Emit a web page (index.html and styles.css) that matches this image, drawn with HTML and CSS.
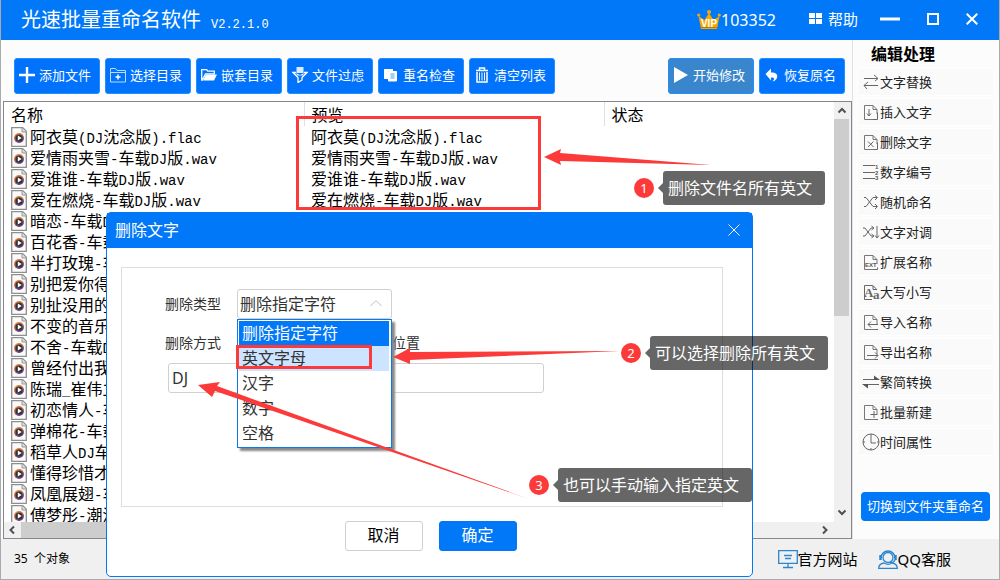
FILE: index.html
```html
<!DOCTYPE html>
<html lang="zh-CN">
<head>
<meta charset="utf-8">
<title>光速批量重命名软件</title>
<link rel="stylesheet" href="styles.css">
</head>
<body>
<svg class="defs" aria-hidden="true">
  <defs>
    <linearGradient id="disc" x1="0" y1="0" x2="0.5" y2="1">
      <stop offset="0" stop-color="#f08a3c"/>
      <stop offset="0.5" stop-color="#c9704e"/>
      <stop offset="1" stop-color="#5a3a8c"/>
    </linearGradient>
    <symbol id="media" viewBox="0 0 16 20">
      <path d="M.7.7h11l3.600 3.600v15H.7z" fill="#fafafa" stroke="#8e8e8e" stroke-width="1.300"/>
      <path d="M11 .8v4.200h4.200" fill="#ddd" stroke="#999"/>
      <circle cx="8" cy="11" r="5" fill="url(#disc)"/>
      <circle cx="8" cy="11" r="3.600" fill="#333"/>
      <path d="M6.800 8.600v4.800l3.900-2.400z" fill="#fff"/>
    </symbol>
    <symbol id="page" viewBox="0 0 18 16">
      <path d="M13.500 15.500H2.500V1.500h8.500l4 4v4.500M11 1.500v4h4" fill="none" stroke="#777"/>
    </symbol>
  </defs>
</svg>
<div class="app">
  <header class="titlebar">
    <h1 class="title">光速批量重命名软件</h1>
    <span class="version">V2.2.1.0</span>
    <div class="account">
      <svg width="24" height="20" viewBox="0 0 24 20"><path d="M4 19 1.500 6l6 4L12 3l4.500 7 6-4L20 19z" fill="#f5a800"/><circle cx="12" cy="2" r="2" fill="#f5a800"/><circle cx="1.700" cy="5" r="1.600" fill="#f5a800"/><circle cx="22.300" cy="5" r="1.600" fill="#f5a800"/><path d="M4 17.500h16" stroke="#b97a10"/><text x="12" y="16.500" class="vip">VIP</text></svg>
      <span>103352</span>
    </div>
    <button class="help"><svg width="14" height="12" viewBox="0 0 14 12"><path d="M0 0h6v5H0zM7 0h6v5H7zM0 6h6v5H0zM7 6h6v5H7z" fill="#fff"/></svg>帮助</button>
    <div class="window-buttons">
      <button aria-label="最小化"><svg width="20" height="14" viewBox="0 0 20 14"><path d="M0 6h20" stroke="#fff" stroke-width="3"/></svg></button>
      <button aria-label="最大化"><svg width="12" height="14" viewBox="0 0 12 14"><path d="M1 1h10v10H1z" fill="none" stroke="#fff" stroke-width="2"/></svg></button>
      <button aria-label="关闭"><svg width="12" height="14" viewBox="0 0 12 14"><path d="m.7.7 10.600 10.600m0-10.600L.7 11.300" stroke="#fff" stroke-width="2"/></svg></button>
    </div>
  </header>

  <div class="body">
    <main class="main">
      <div class="toolbar">
        <button class="tool"><svg width="16" height="16"><path d="M8 0v16M0 8h16" stroke="#fff" stroke-width="2.400"/></svg>添加文件</button>
        <button class="tool"><svg width="16" height="16"><path d="M.5 4.500v-3h5l1.500 2h8.500v11.500H.5z M.5 5.500h15" fill="none" stroke="#b9dcff"/><path d="M8 7.500v5M5.500 10h5" stroke="#fff" stroke-width="1.500"/></svg>选择目录</button>
        <button class="tool"><svg width="16" height="16"><path d="M.7 13V2.700h5l1 1.500h6.600v2.600H4.500L1.300 13z" fill="none" stroke="#fff" stroke-width="1.300"/><path d="M5 7.500h11L13 13.500H2z" fill="#fff"/></svg>嵌套目录</button>
        <button class="tool"><svg width="16" height="16"><path d="M4.500 0h7v6h-7z" fill="#d9ecff"/><path d="M4 5.500H1l5 5v5l4-2.500v-2.500l5-5h-3" fill="none" stroke="#fff" stroke-width="1.300"/><path d="m3.500 6 4.500 2 4.500-2-2 2.500h-5z" fill="#fff"/></svg>文件过虑</button>
        <button class="tool"><svg width="16" height="16"><path d="M1 2h9v2H5v8H1z" fill="#fff"/><path d="M5.500 4.500h8v9.500h-8z" fill="#fff" stroke="#fff"/><path d="M7.500 7h4M7.500 9h4M7.500 11h4" stroke="#4b9df5"/></svg>重名检查</button>
        <button class="tool"><svg width="16" height="16"><path d="M2 3.500h12M5.500 3V1h5v2M3 5v10h10V5" fill="none" stroke="#fff" stroke-width="1.500"/><path d="M5.500 5.500v8M8 5.500v8M10.500 5.500v8" stroke="#fff"/></svg>清空列表</button>
        <button class="tool tool-start"><svg width="16" height="16"><path d="M1 0v16l14-8z" fill="#fff"/></svg>开始修改</button>
        <button class="tool"><svg width="16" height="16"><path d="M7 1.500v4c5 0 7 2 6 5-.5 2-2 3.500-4.500 4 2.500-2.500 2-4-1.500-4v3L1.500 7z" fill="#fff"/></svg>恢复原名</button>
      </div>

      <div class="listbox">
        <div class="list-view">
          <table class="files">
            <thead><tr><th>名称</th><th>预览</th><th>状态</th></tr></thead>
            <tbody>
              <tr><td><svg class="fi"><use href="#media"/></svg>阿衣莫<i>(DJ</i>沈念版<i>).flac</i></td><td>阿衣莫<i>(DJ</i>沈念版<i>).flac</i></td><td></td></tr>
              <tr><td><svg class="fi"><use href="#media"/></svg>爱情雨夹雪<i>-</i>车载<i>DJ</i>版<i>.wav</i></td><td>爱情雨夹雪<i>-</i>车载<i>DJ</i>版<i>.wav</i></td><td></td></tr>
              <tr><td><svg class="fi"><use href="#media"/></svg>爱谁谁<i>-</i>车载<i>DJ</i>版<i>.wav</i></td><td>爱谁谁<i>-</i>车载<i>DJ</i>版<i>.wav</i></td><td></td></tr>
              <tr><td><svg class="fi"><use href="#media"/></svg>爱在燃烧<i>-</i>车载<i>DJ</i>版<i>.wav</i></td><td>爱在燃烧<i>-</i>车载<i>DJ</i>版<i>.wav</i></td><td></td></tr>
              <tr><td><svg class="fi"><use href="#media"/></svg>暗恋<i>-</i>车载<i>D</i></td><td></td><td></td></tr>
              <tr><td><svg class="fi"><use href="#media"/></svg>百花香<i>-</i>车载</td><td></td><td></td></tr>
              <tr><td><svg class="fi"><use href="#media"/></svg>半打玫瑰<i>-</i>车</td><td></td><td></td></tr>
              <tr><td><svg class="fi"><use href="#media"/></svg>别把爱你得</td><td></td><td></td></tr>
              <tr><td><svg class="fi"><use href="#media"/></svg>别扯没用的</td><td></td><td></td></tr>
              <tr><td><svg class="fi"><use href="#media"/></svg>不变的音乐</td><td></td><td></td></tr>
              <tr><td><svg class="fi"><use href="#media"/></svg>不舍<i>-</i>车载<i>D</i></td><td></td><td></td></tr>
              <tr><td><svg class="fi"><use href="#media"/></svg>曾经付出我</td><td></td><td></td></tr>
              <tr><td><svg class="fi"><use href="#media"/></svg>陈瑞<i>_</i>崔伟立</td><td></td><td></td></tr>
              <tr><td><svg class="fi"><use href="#media"/></svg>初恋情人<i>-</i>车</td><td></td><td></td></tr>
              <tr><td><svg class="fi"><use href="#media"/></svg>弹棉花<i>-</i>车载</td><td></td><td></td></tr>
              <tr><td><svg class="fi"><use href="#media"/></svg>稻草人<i>DJ</i>车</td><td></td><td></td></tr>
              <tr><td><svg class="fi"><use href="#media"/></svg>懂得珍惜才</td><td></td><td></td></tr>
              <tr><td><svg class="fi"><use href="#media"/></svg>凤凰展翅<i>-</i>车</td><td></td><td></td></tr>
              <tr><td><svg class="fi"><use href="#media"/></svg>傅梦彤<i>-</i>潮汐</td><td></td><td></td></tr>
            </tbody>
          </table>
        </div>
        <div class="vbar">
          <svg width="16" height="17"><path d="m4.500 10.500 3.500-3.500 3.500 3.500" class="chev"/></svg>
          <div class="vthumb"></div>
          <svg width="16" height="17" class="end"><path d="m4.500 5.500 3.500 3.500 3.500-3.500" class="chev"/></svg>
        </div>
        <div class="hbar">
          <svg width="17" height="16"><path d="M10 4.500 6.500 8l3.500 3.500" class="chev"/></svg>
          <div class="hthumb"></div>
          <svg width="17" height="16" class="end"><path d="M6 4.500 9.500 8 6 11.500" class="chev"/></svg>
        </div>
      </div>
    </main>

    <aside class="side">
      <h2 class="side-title">编辑处理</h2>
      <nav class="side-list">
        <button class="side-item"><svg width="18" height="18"><path d="M2 5.500h14m-4-3.500 4 3.500-3 2.500M16 12.500H2m4-3.500-4 3.500L5 16" class="ln"/></svg>文字替换</button>
        <button class="side-item"><svg width="18" height="18"><use href="#page" width="18" height="16" y="1"/><path d="M7 6v7m-2-2.500 2 2.500 2-2.500M11 16.500h4.500v-7" class="ln"/></svg>插入文字</button>
        <button class="side-item"><svg width="18" height="18"><use href="#page" width="18" height="16" y="1"/><path d="m6 8.500 5.500 5.500m0-5.500L6 14M12 16.500h3.500v-7" class="ln"/></svg>删除文字</button>
        <button class="side-item"><svg width="18" height="18"><path d="M1 2.500h12M1 9.500h12M1 15.500h12" class="ln"/><text x="13" y="6" class="mini">1</text><text x="13" y="11.500" class="mini">2</text><text x="13" y="17" class="mini">3</text></svg>数字编号</button>
        <button class="side-item"><svg width="18" height="18"><path d="M2 4.500h2l7 9h4M2 13.500h2l7-9h4m-2-2 2.500 2L13 7m0 4 2.500 2.500L13 16" class="ln"/></svg>随机命名</button>
        <button class="side-item"><svg width="18" height="18"><path d="M1 5h2l6 8h2.500M1 13h2l6-8h2.500M9.500 3l2.500 2-2.500 2M9.500 11l2.500 2-2.500 2M15 3v12m-2-2.500 2 2.500 2-2.500" class="ln"/></svg>文字对调</button>
        <button class="side-item"><svg width="18" height="18"><use href="#page" width="18" height="16" y="1"/><text x="3" y="14" class="mini">EXT</text><path d="M12 16.500h3.500v-2" class="ln"/></svg>扩展名称</button>
        <button class="side-item"><svg width="18" height="18"><path d="M10 16.500H2.500V2.500h8l4 3.500M11 2.500v4h4" class="ln"/><text x="2" y="14" class="aa">A</text><text x="11" y="16" class="aa">a</text></svg>大写小写</button>
        <button class="side-item"><svg width="18" height="18"><use href="#page" width="18" height="16" y="1"/><path d="M16 11.500H6M9 8.500l-3 3 3 3M13 16.500h3" class="ln"/></svg>导入名称</button>
        <button class="side-item"><svg width="18" height="18"><use href="#page" width="18" height="16" y="1"/><path d="M5 12.500h11m-3-3 3 3-3 3M13 16.500h3" class="ln"/></svg>导出名称</button>
        <button class="side-item"><svg width="18" height="18"><path d="M1 6.500h16M17 11.500H1" class="ln"/><path d="M12 2.500 18 7h-6zM6 15.500 0 11h6z" fill="#555"/></svg>繁简转换</button>
        <button class="side-item"><svg width="18" height="18"><use href="#page" width="18" height="16" y="1"/><path d="M12 8v7M8.500 11.500h7M13 16.500h3" class="ln"/></svg>批量新建</button>
        <button class="side-item"><svg width="18" height="18"><circle cx="9" cy="9" r="8" class="ln"/><path d="M9 3v7h5M9 1v2M9 15v2M1 9h2M15 9h2" class="ln"/></svg>时间属性</button>
      </nav>
      <button class="switch">切换到文件夹重命名</button>
    </aside>
  </div>

  <footer class="status">
    <span class="count">35&nbsp; 个对象</span>
    <a class="link" href="#"><svg width="20" height="20"><path d="M.7 1.700h18.600v12.600H.7zM10 14.500v4M5 18.500h10M6 6.500h8M7 9.500h6" fill="none" stroke="#2b86d0" stroke-width="1.300"/></svg>官方网站</a>
    <a class="link" href="#"><svg width="20" height="20"><path d="M3 9a7 7 0 0 1 14 0" fill="none" stroke="#2b86d0" stroke-width="1.500"/><circle cx="10" cy="8.500" r="5" fill="none" stroke="#2b86d0" stroke-width="1.300"/><path d="M2.500 6v5M17.500 6v5" stroke="#2b86d0" stroke-width="2.500"/><path d="M17 11c-1 2-3 3-5 3M.7 19.300c0-3 2-4.800 5.300-5.300 2.500 1.700 5.500 1.700 8 0 3.300.5 5.300 2.300 5.300 5.300z" fill="none" stroke="#2b86d0" stroke-width="1.300"/></svg>QQ客服</a>
  </footer>
</div>

<section class="dialog" role="dialog" aria-labelledby="dlg-title">
  <header class="dialog-head">
    <h2 id="dlg-title" class="dialog-title">删除文字</h2>
    <button class="dialog-close" aria-label="关闭"><svg width="12" height="12"><path d="m.5.5 11 11m0-11-11 11" stroke="#fff"/></svg></button>
  </header>
  <div class="panel">
    <div class="fields">
      <label for="kind">删除类型</label>
      <div class="combo">
        <select id="kind" class="combo-box"><option>删除指定字符</option><option>英文字母</option><option>汉字</option><option>数字</option><option>空格</option></select>
        <svg class="combo-arrow" width="12" height="8"><path d="m.5 7 5.500-5.500L11.500 7" fill="none" stroke="#bbb"/></svg>
        <ul class="menu">
          <li class="selected">删除指定字符</li><li class="hover">英文字母</li><li>汉字</li><li>数字</li><li>空格</li>
        </ul>
      </div>
      <span></span>
      <span>删除方式</span><span></span><span>位置</span>
    </div>
    <input class="chars" type="text" value="DJ" aria-label="指定字符">
  </div>
  <div class="actions">
    <button class="action">取消</button>
    <button class="action primary">确定</button>
  </div>
</section>

<svg class="arrows" width="1000" height="580" aria-hidden="true">
  <path d="m544 157 17-8-1 4 151 12-151-4 1 4z"/>
  <path d="m393 357 17-9v4l210-1-210 9v4z"/>
  <path d="m198 385 22-3-3 4 312 113-314-108-3 6z"/>
</svg>
<div class="frame frame-preview"></div>
<div class="frame frame-option"></div>
<div class="note note-1"><span class="num">1</span><span class="tip">删除文件名所有英文</span></div>
<div class="note note-2"><span class="num">2</span><span class="tip">可以选择删除所有英文</span></div>
<div class="note note-3"><span class="num">3</span><span class="tip">也可以手动输入指定英文</span></div>
</body>
</html>
```

FILE: styles.css
```css
* { box-sizing: border-box; }
body {
  margin: 0;
  position: relative;
  font-family: "Noto Sans", "Noto Sans CJK SC", sans-serif;
  font-size: 16px;
  line-height: 20px;
  color: #000;
}
button, input, select { font: inherit; margin: 0; }
button { padding: 0; border: 0; background: none; color: inherit; }
h1, h2, ul { margin: 0; padding: 0; font-weight: 400; list-style: none; }
svg { flex: none; }
.defs { position: absolute; width: 0; height: 0; }

.app {
  display: flex;
  flex-direction: column;
  height: 100vh;
  border: 1px solid #aaa;
  border-top: 0;
  background: #f0f0f0;
}

/* Title bar */
.titlebar {
  flex: none;
  display: flex;
  align-items: center;
  height: 40px;
  padding: 0 21px 0 20px;
  background: #0078f8;
  color: #fff;
}
.title { font-size: 20px; }
.version {
  margin: 10px 0 0 10px;
  font: 12px/20px "Liberation Mono", monospace;
}
.account { display: flex; align-items: center; margin-left: auto; }
.vip { font: bold 10px "Liberation Sans", sans-serif; fill: #fff; text-anchor: middle; }
.help { display: flex; align-items: center; gap: 5px; margin-left: 33px; padding-bottom: 2px; font-size: 15px; }
.window-buttons { display: flex; gap: 27px; margin-left: 22px; }
.window-buttons button { display: flex; }

/* Main area */
.body { flex: 1; min-height: 0; display: grid; grid-template-columns: 1fr 147px; }
.main { display: flex; flex-direction: column; min-width: 0; min-height: 0; background: #fcfcfc; }
.toolbar { flex: none; display: flex; gap: 5px; padding: 18px 7px 7px 13px; }
.tool {
  display: flex;
  align-items: center;
  gap: 4px;
  width: 86px;
  height: 36px;
  padding: 0 0 2px 4px;
  border: 1px solid #1e90ff;
  border-radius: 3px;
  background: #0072fc;
  color: #fff;
  font-size: 13px;
}
.tool-start { margin-left: auto; background: #3a86cc; }

.listbox {
  flex: 1;
  min-height: 0;
  display: grid;
  grid-template: 1fr 16px / 1fr 17px;
  margin-left: 2px;
  border: 1px solid #828790;
  background: #f0f0f0;
}
.list-view { overflow: hidden; background: #fff; }
.files { width: 100%; table-layout: fixed; border-collapse: collapse; }
.files th, .files td { height: 21px; padding: 0 0 0 7px; text-align: left; font-weight: 400; line-height: 20px; white-space: nowrap; }
.files th { height: 24px; padding-top: 2px; border-right: 1px solid #e0e0e0; }
.files th:nth-child(-n+2) { width: 300px; }
.files th:last-child { border-right: 0; }
.files i { font: 14px/1 "Liberation Mono", monospace; }
.fi { width: 16px; height: 20px; margin-right: 3px; vertical-align: top; }
.vbar { display: flex; flex-direction: column; }
.vthumb { width: 15px; height: 47%; background: #cdcdcd; }
.vbar .end { margin-top: auto; }
.hbar { display: flex; grid-column: 1; }
.hthumb { width: 55%; background: #cdcdcd; }
.hbar .end { margin-left: auto; }
.chev { fill: none; stroke: #505050; stroke-width: 2; }

/* Sidebar */
.side {
  display: flex;
  flex-direction: column;
  padding: 4px 4px 18px;
  border-left: 1px solid #e2e2e2;
  background: #fcfcfc;
}
.side-title { margin: 0 0 4px 14px; font-size: 16px; font-weight: 700; }
.side-list { display: flex; flex-direction: column; gap: 2px; }
.side-item {
  display: flex;
  align-items: center;
  height: 28px;
  padding-left: 4px;
  border: 1px solid #fff;
  border-radius: 3px;
  background: #fafafa;
  color: #222;
  font-size: 13px;
}
.ln { fill: none; stroke: #666; }
.mini { font: bold 6px "Liberation Sans", sans-serif; fill: #555; }
.aa { font: bold 13px "Liberation Serif", serif; fill: #666; }
.switch {
  height: 29px;
  margin: auto 5px 0 4px;
  padding-bottom: 2px;
  border-radius: 4px;
  background: #0078f8;
  color: #fff;
  font-size: 13px;
}

/* Status bar */
.status { flex: none; display: flex; align-items: center; gap: 20px; height: 40px; padding: 0 48px 0 13px; }
.count { margin-right: auto; font-size: 12px; }
.link { display: flex; align-items: center; color: #000; font-size: 15px; text-decoration: none; }

/* Dialog */
.dialog {
  position: absolute;
  z-index: 0;
  left: 106px;
  top: 212px;
  width: 647px;
  border: 1px solid #0078f8;
  border-radius: 5px;
  background: #fff;
}
.dialog-head {
  display: flex;
  align-items: center;
  justify-content: space-between;
  height: 35px;
  padding: 0 12px 2px 8px;
  background: #0078f8;
  color: #fff;
}
.dialog-title { font-size: 16px; }
.dialog-close { display: flex; }
.panel { height: 240px; margin: 19px 29px 0 14px; padding: 21px 42px; border: 1px solid #ddd; }
.fields {
  display: grid;
  grid-template-columns: 72px 155px auto;
  grid-template-rows: 30px 48px;
  align-items: center;
  padding-left: 1px;
  font-size: 14px;
  color: #333;
}
.combo { position: relative; font-size: 16px; }
.combo-box {
  display: block;
  width: 100%;
  height: 30px;
  padding: 0 2px;
  border: 1px solid #d0d0d0;
  border-radius: 3px;
  appearance: none;
  background: #fff;
  color: #333;
}
.combo-arrow { position: absolute; right: 10px; top: 10px; }
.menu {
  position: absolute;
  z-index: 1;
  left: 0;
  top: 30px;
  width: 100%;
  padding: 1px 2px 1px 1px;
  border: 1px solid #0a78e6;
  background: #fff;
  box-shadow: 3px 3px 2px #888;
}
.menu li { padding: 0 3px; line-height: 25px; }
.menu .selected { background: #0078f8; color: #fff; }
.menu .hover { background: #cce4ff; }
.chars {
  display: block;
  width: 376px;
  height: 30px;
  margin: -4px 0 0 4px;
  padding: 0 3px;
  border: 1px solid #d0d0d0;
  border-radius: 3px;
  color: #333;
}
.actions { display: flex; justify-content: center; gap: 16px; padding: 14px 0 25px 2px; }
.action { width: 78px; height: 30px; padding-bottom: 2px; border: 1px solid #d0d0d0; border-radius: 3px; background: #fff; }
.primary { border-color: #0078f8; background: #0078f8; color: #fff; }

/* Callouts drawn over the windows */
.arrows { position: absolute; left: 0; top: 0; fill: #fc3a39; pointer-events: none; }
.frame { position: absolute; border: 3px solid #fc3a39; pointer-events: none; }
.frame-preview { left: 296px; top: 116px; width: 245px; height: 94px; }
.frame-option { left: 236px; top: 345px; width: 136px; height: 24px; }
.note { position: absolute; display: flex; align-items: center; gap: 9px; color: #fff; }
.note-1 { left: 634px; top: 171px; }
.note-2 { left: 621px; top: 336px; }
.note-3 { left: 529px; top: 468px; }
.num { width: 20px; border-radius: 50%; background: #fc3a39; font-size: 13px; text-align: center; }
.tip { position: relative; padding: 7px 13px 7px 5px; border-radius: 3px; background: rgba(0, 0, 0, 0.6); white-space: nowrap; }
.tip::before {
  content: "";
  position: absolute;
  right: 100%;
  top: 12px;
  border: 5px solid transparent;
  border-left: 0;
  border-right-color: rgba(0, 0, 0, 0.6);
}
```
